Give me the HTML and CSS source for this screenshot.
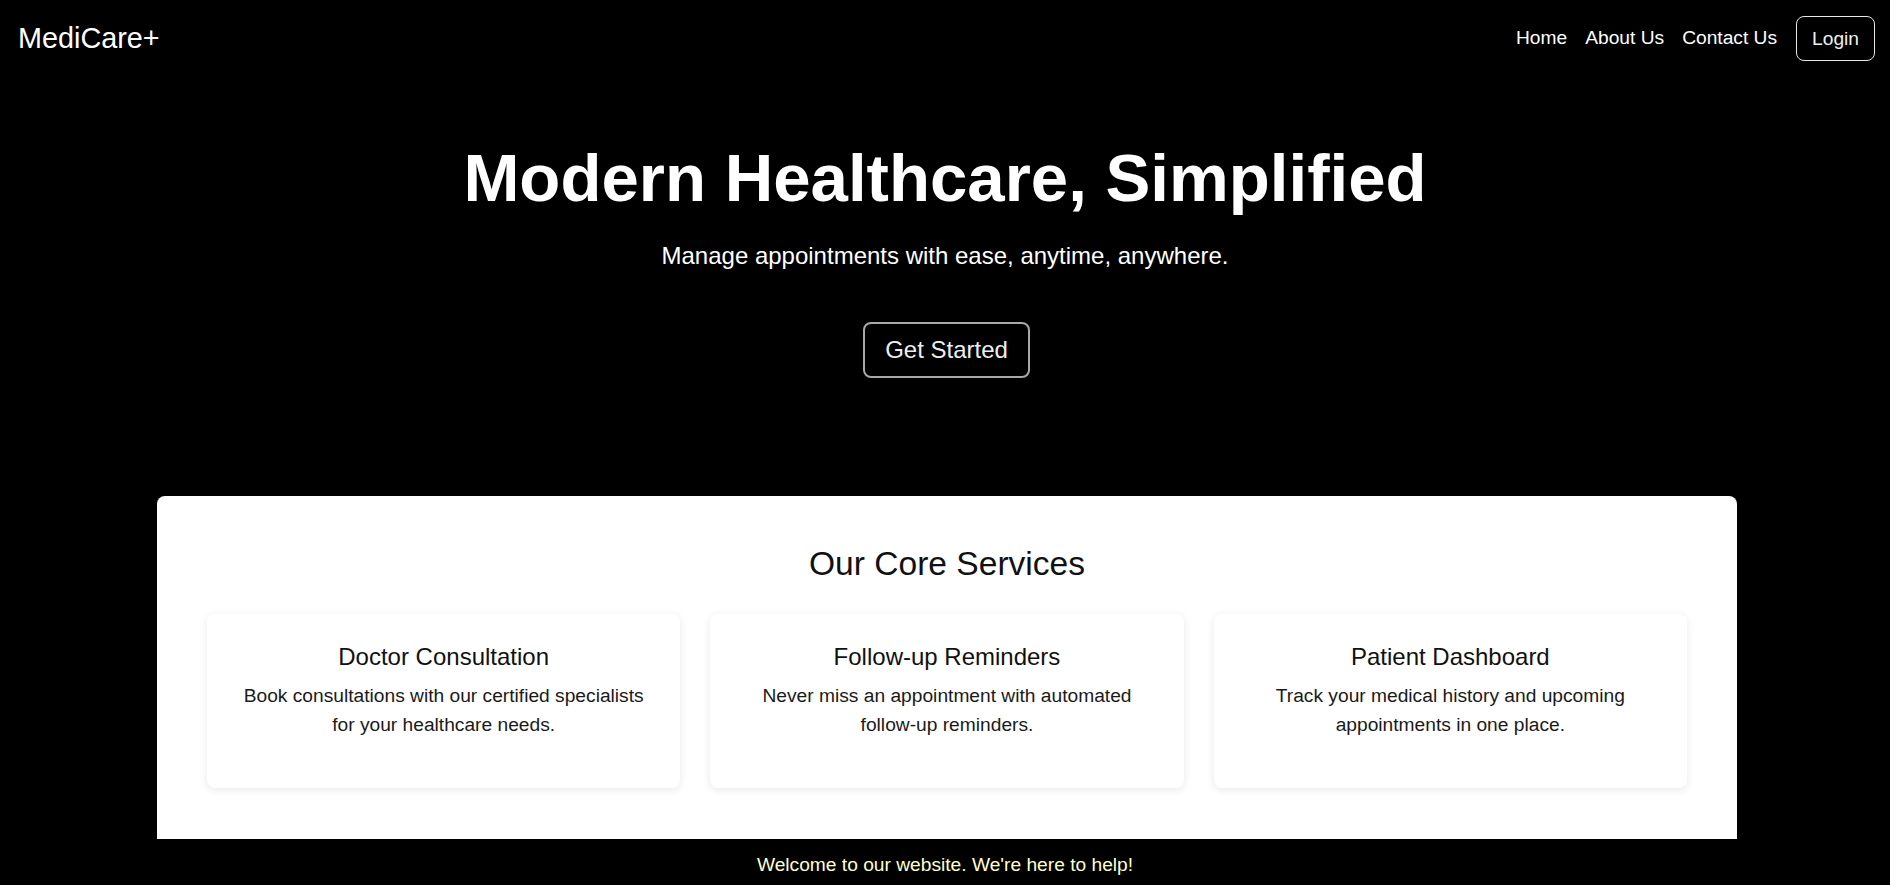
FILE: index.html
```html
<!DOCTYPE html>
<html lang="en">
<head>
<meta charset="utf-8">
<title>MediCare+</title>
<link rel="stylesheet" href="styles.css">
</head>
<body>
<header class="navbar">
  <div class="logo">MediCare+</div>
  <nav class="nav-links">
    <a href="#" class="nav-link">Home</a>
    <a href="#" class="nav-link">About Us</a>
    <a href="#" class="nav-link">Contact Us</a>
    <a href="#" class="login-btn">Login</a>
  </nav>
</header>

<section class="hero">
  <h1 class="hero-title">Modern Healthcare, Simplified</h1>
  <p class="hero-sub">Manage appointments with ease, anytime, anywhere.</p>
  <a href="#" class="cta-btn">Get Started</a>
</section>

<section class="services">
  <h2 class="services-title">Our Core Services</h2>
  <div class="cards">
    <div class="card">
      <h3 class="card-title">Doctor Consultation</h3>
      <p class="card-text">Book consultations with our certified specialists for your healthcare needs.</p>
    </div>
    <div class="card">
      <h3 class="card-title">Follow-up Reminders</h3>
      <p class="card-text">Never miss an appointment with automated follow-up reminders.</p>
    </div>
    <div class="card">
      <h3 class="card-title">Patient Dashboard</h3>
      <p class="card-text">Track your medical history and upcoming appointments in one place.</p>
    </div>
  </div>
</section>

<footer class="footer">
  <p class="footer-text">Welcome to our website. We're here to help!</p>
</footer>
</body>
</html>
```

FILE: styles.css
```css
* {
  box-sizing: border-box;
}

html, body {
  margin: 0;
  padding: 0;
}

body {
  background: #000;
  color: #fff;
  font-family: "Liberation Sans", Arial, sans-serif;
}

.navbar {
  display: flex;
  align-items: center;
  justify-content: space-between;
  height: 76px;
  padding: 0 15px 0 18px;
}

.logo {
  font-size: 28.8px;
  color: #fff;
}

.nav-links {
  display: flex;
  align-items: center;
  gap: 18px;
}

.nav-link {
  color: #fff;
  text-decoration: none;
  font-size: 19.2px;
}

.login-btn {
  margin-left: 1px;
  color: #f0f0f0;
  text-decoration: none;
  font-size: 19.2px;
  border: 1px solid #e6e6e6;
  border-radius: 8px;
  padding: 11px 15px 10px;
}

.hero {
  display: flex;
  flex-direction: column;
  align-items: center;
  text-align: center;
  padding: 63px 0 118px;
}

.hero-title {
  margin: 0;
  font-size: 67.2px;
  font-weight: bold;
  color: #fff;
}

.hero-sub {
  margin: 26px 0 0;
  font-size: 24px;
  color: #fff;
}

.cta-btn {
  margin-top: 52px;
  margin-left: 3px;
  color: #eee;
  text-decoration: none;
  font-size: 24px;
  border: 2px solid #a8a8a8;
  border-radius: 8px;
  padding: 12px 20px;
}

.services {
  margin: 0 153px 0 157px;
  background: #fff;
  color: #000;
  border-radius: 8px 8px 0 0;
  padding: 49px 50px 51px;
}

.services-title {
  margin: 0 0 31px;
  text-align: center;
  font-size: 33.6px;
  font-weight: normal;
  color: #111;
}

.cards {
  display: grid;
  grid-template-columns: repeat(3, 1fr);
  gap: 30px;
}

.card {
  background: #fff;
  border-radius: 8px;
  box-shadow: 0 2px 8px rgba(0, 0, 0, 0.09);
  padding: 29px 30px 28px;
  text-align: center;
}

.card-title {
  margin: 0 0 11px;
  font-size: 24px;
  font-weight: normal;
  color: #111;
}

.card-text {
  margin: 0 0 20px;
  font-size: 19.2px;
  line-height: 1.5;
  color: #1a1a1a;
}

.footer {
  background: #000;
  padding: 15px 0 9px;
  text-align: center;
}

.footer-text {
  margin: 0;
  font-size: 19.2px;
  color: #ffffcc;
}
```
